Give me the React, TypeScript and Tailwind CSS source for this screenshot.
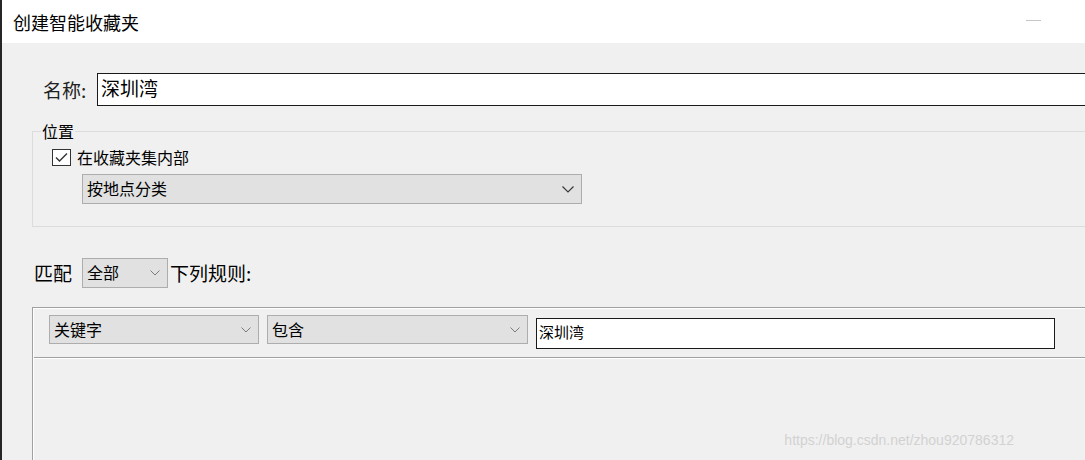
const Chevron = ({ big }: { big?: boolean }) =>
  big ? (
    <svg width="12" height="7" viewBox="0 0 12 7">
      <polyline points="0.5,0.5 6,6 11.5,0.5" fill="none" stroke="#3a3a3a" strokeWidth="1.2" />
    </svg>
  ) : (
    <svg width="10" height="6" viewBox="0 0 10 6">
      <polyline points="0.5,0.5 5,5 9.5,0.5" fill="none" stroke="#7c7c7c" strokeWidth="1" />
    </svg>
  );

const Combo = ({ text, w, h = 30, big }: { text: string; w: number; h?: number; big?: boolean }) => (
  <div
    className="flex items-center justify-between bg-[#e1e1e1] border border-[#adadad] pl-[4px] pr-[7px] text-[16px] leading-[20px] text-black shrink-0"
    style={{ width: w, height: h }}
  >
    <span className="-mt-[2px]">{text}</span>
    <Chevron big={big} />
  </div>
);

export default function App() {
  return (
    <div className="relative w-[1085px] h-[460px] overflow-hidden flex flex-col border-l-2 border-[#262626] bg-[#f0f0f0] text-black [font-family:'Noto_Sans_CJK_SC','Liberation_Sans',sans-serif]">
      {/* title bar */}
      <div className="h-[43px] bg-white flex items-center pl-[11px] shrink-0">
        <span className="text-[18px] leading-[24px]">创建智能收藏夹</span>
        <div className="ml-auto mr-[44px] self-start mt-[20px] w-[15px] h-px bg-[#c6c6c6]" />
      </div>

      {/* name */}
      <div className="flex items-center mt-[30px] shrink-0">
        <span className="ml-[41px] w-[54px] shrink-0 text-[19px] leading-[24px] text-[#222]">名称:</span>
        <div className="w-[1000px] shrink-0 h-[33px] border border-[#1a1a1a] bg-white pl-[3px] pb-[3px] flex items-center text-[19px] leading-[24px]">
          深圳湾
        </div>
      </div>

      {/* location group */}
      <fieldset className="ml-[30px] mt-[15px] w-[1100px] shrink-0 border border-[#dcdcdc] pb-[22px]">
        <legend className="ml-[8px] px-px text-[16px] leading-[20px]">位置</legend>
        <div className="flex items-center mt-[6px] pl-[19px] h-[20px]">
          <div className="w-[19px] h-[17px] border border-[#333] bg-white flex items-center justify-center">
            <svg width="13" height="11" viewBox="0 0 13 11">
              <polyline points="1,5.5 4.5,9 12,1.5" fill="none" stroke="#333" strokeWidth="1.4" />
            </svg>
          </div>
          <span className="ml-[6px] -mt-[1px] text-[16px] leading-[20px]">在收藏夹集内部</span>
        </div>
        <div className="mt-[7px] ml-[49px]">
          <Combo text="按地点分类" w={500} big />
        </div>
      </fieldset>

      {/* match row */}
      <div className="flex items-center mt-[31px] shrink-0">
        <span className="ml-[32px] w-[48px] text-[19px] leading-[24px]">匹配</span>
        <Combo text="全部" w={86} />
        <span className="ml-[2px] text-[19px] leading-[24px]">下列规则:</span>
      </div>

      {/* rules box */}
      <div className="ml-[30px] mt-[19px] flex-1 w-[1100px] shrink-0 border-t border-l border-[#a0a0a0]">
        <div className="h-full border-t border-l border-white flex flex-col">
          <div className="flex items-start pt-[6px] pl-[15px] pb-[8px] gap-[8px] border-b border-[#a0a0a0]">
            <Combo text="关键字" w={210} h={29} />
            <Combo text="包含" w={261} h={29} />
            <div className="mt-[3px] w-[519px] shrink-0 h-[31px] border border-[#1a1a1a] bg-white pl-[2px] pb-[4px] flex items-center text-[15px] leading-[20px]">
              深圳湾
            </div>
          </div>
          <div className="h-px bg-white" />
        </div>
      </div>

      {/* watermark */}
      <span className="absolute right-[71px] bottom-[11px] text-[14px] leading-[18px] text-[#d2d2d2] [font-family:'Liberation_Sans',sans-serif]">
        https://blog.csdn.net/zhou920786312
      </span>
    </div>
  );
}
